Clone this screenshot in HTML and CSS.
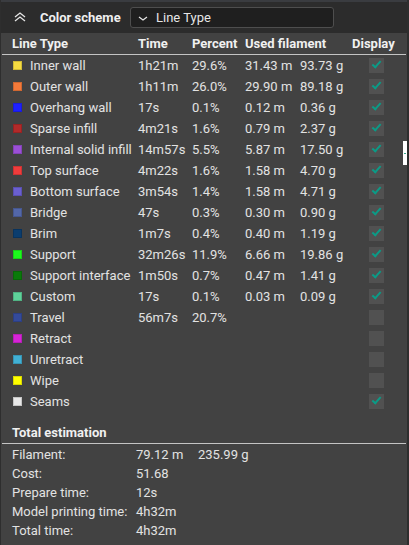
FILE: index.html
```html
<!DOCTYPE html>
<html>
<head>
<meta charset="utf-8">
<link rel="stylesheet" href="styles.css">
</head>
<body>
<div class="panel">
  <div class="topbar">
    <svg class="collapse" width="12" height="10" viewBox="0 0 12 10"><path d="M1 5 L6 1 L11 5 M1 9 L6 5 L11 9" fill="none" stroke="#e6e6e6" stroke-width="1.3"/></svg>
    <span class="title">Color scheme</span>
    <div class="select">
      <svg width="10" height="5" viewBox="0 0 10 5"><path d="M1 1 L5 4 L9 1" fill="none" stroke="#e6e6e6" stroke-width="1.2"/></svg>
      <span>Line Type</span>
    </div>
  </div>
  <div class="body">
    <div class="thead">
      <span class="h-type">Line Type</span>
      <span>Time</span>
      <span>Percent</span>
      <span class="h-used">Used filament</span>
      <span class="h-disp">Display</span>
    </div>
    <div class="rule"></div>
    <div class="rows">
      <div class="row"><i class="sw" style="background:#f6dc41"></i><span>Inner wall</span><span>1h21m</span><span>29.6%</span><span>31.43 m</span><span>93.73 g</span><b class="cb on"></b></div>
      <div class="row"><i class="sw" style="background:#f47a3a"></i><span>Outer wall</span><span>1h11m</span><span>26.0%</span><span>29.90 m</span><span>89.18 g</span><b class="cb on"></b></div>
      <div class="row"><i class="sw" style="background:#1e20ff"></i><span>Overhang wall</span><span>17s</span><span>0.1%</span><span>0.12 m</span><span>0.36 g</span><b class="cb on"></b></div>
      <div class="row"><i class="sw" style="background:#b22a2a"></i><span>Sparse infill</span><span>4m21s</span><span>1.6%</span><span>0.79 m</span><span>2.37 g</span><b class="cb on"></b></div>
      <div class="row"><i class="sw" style="background:#9b4fd6"></i><span>Internal solid infill</span><span>14m57s</span><span>5.5%</span><span>5.87 m</span><span>17.50 g</span><b class="cb on"></b></div>
      <div class="row"><i class="sw" style="background:#f03c3c"></i><span>Top surface</span><span>4m22s</span><span>1.6%</span><span>1.58 m</span><span>4.70 g</span><b class="cb on"></b></div>
      <div class="row"><i class="sw" style="background:#6a5fd0"></i><span>Bottom surface</span><span>3m54s</span><span>1.4%</span><span>1.58 m</span><span>4.71 g</span><b class="cb on"></b></div>
      <div class="row"><i class="sw" style="background:#5367a8"></i><span>Bridge</span><span>47s</span><span>0.3%</span><span>0.30 m</span><span>0.90 g</span><b class="cb on"></b></div>
      <div class="row"><i class="sw" style="background:#0b3d6e"></i><span>Brim</span><span>1m7s</span><span>0.4%</span><span>0.40 m</span><span>1.19 g</span><b class="cb on"></b></div>
      <div class="row"><i class="sw" style="background:#1cfa1c"></i><span>Support</span><span>32m26s</span><span>11.9%</span><span>6.66 m</span><span>19.86 g</span><b class="cb on"></b></div>
      <div class="row"><i class="sw" style="background:#0a7a0a"></i><span>Support interface</span><span>1m50s</span><span>0.7%</span><span>0.47 m</span><span>1.41 g</span><b class="cb on"></b></div>
      <div class="row"><i class="sw" style="background:#5ed29a"></i><span>Custom</span><span>17s</span><span>0.1%</span><span>0.03 m</span><span>0.09 g</span><b class="cb on"></b></div>
      <div class="row"><i class="sw" style="background:#344a9a"></i><span>Travel</span><span>56m7s</span><span>20.7%</span><span></span><span></span><b class="cb"></b></div>
      <div class="row"><i class="sw" style="background:#d624d6"></i><span>Retract</span><span></span><span></span><span></span><span></span><b class="cb"></b></div>
      <div class="row"><i class="sw" style="background:#41b0d4"></i><span>Unretract</span><span></span><span></span><span></span><span></span><b class="cb"></b></div>
      <div class="row"><i class="sw" style="background:#ffff00"></i><span>Wipe</span><span></span><span></span><span></span><span></span><b class="cb"></b></div>
      <div class="row"><i class="sw" style="background:#e8e8e8"></i><span>Seams</span><span></span><span></span><span></span><span></span><b class="cb on"></b></div>
    </div>
    <div class="total-title">Total estimation</div>
    <div class="rule"></div>
    <div class="summary">
      <span>Filament:</span><span class="val"><span class="m">79.12 m</span><span>235.99 g</span></span>
      <span>Cost:</span><span class="val">51.68</span>
      <span>Prepare time:</span><span class="val">12s</span>
      <span>Model printing time:</span><span class="val">4h32m</span>
      <span>Total time:</span><span class="val">4h32m</span>
    </div>
  </div>
  <div class="edge-tab"><i></i></div>
</div>
</body>
</html>
```

FILE: styles.css
```css
html, body {
  margin: 0;
  padding: 0;
  background: #424242;
}
body {
  font-family: Roboto, "Noto Sans", sans-serif;
  font-size: 13px;
  color: #e2e2e2;
}
.panel {
  position: relative;
  width: 409px;
  height: 545px;
  box-sizing: border-box;
  background: #424242;
  border-left: 1px solid #2e2e2e;
  border-right: 2px solid #2e2e2e;
  overflow: hidden;
}
.topbar {
  height: 31px;
  border-top: 2px solid #3a3c40;
  background: #2c2c2c;
  display: flex;
  align-items: center;
  padding-left: 13px;
}
.collapse {
  display: block;
  margin-top: -1px;
}
.title {
  font-weight: bold;
  color: #efefef;
  margin-left: 14px;
  width: 76px;
  white-space: nowrap;
}
.select {
  margin-left: 14px;
  width: 195px;
  height: 19px;
  border: 1px solid #4e4e4e;
  border-radius: 3px;
  background: #1f1f1f;
  display: flex;
  align-items: center;
  padding-left: 7px;
  gap: 8px;
  color: #e6e6e6;
}
.select svg { display: block; margin-top: 2px; }
.thead {
  height: 21px;
  display: grid;
  grid-template-columns: 126px 54px 53px 107px auto;
  align-items: center;
  padding-left: 11px;
  font-weight: bold;
  color: #f0f0f0;
  white-space: nowrap;
}
.rule {
  height: 1px;
  background: #c4c4c4;
  margin: 0 1px 0 1px;
}
.row {
  height: 21px;
  display: grid;
  grid-template-columns: 17px 108px 54px 53px 55px 69px 15px;
  align-items: center;
  padding-left: 12px;
  white-space: nowrap;
}
.sw {
  display: block;
  width: 9px;
  height: 9px;
  box-sizing: border-box;
  border: 1px solid rgba(0,0,0,0.15);
}
.cb {
  display: block;
  width: 15px;
  height: 15px;
  background: #515151;
  position: relative;
}
.cb.on::after {
  content: "";
  position: absolute;
  left: 3px;
  top: 3px;
  width: 9px;
  height: 5px;
  border-left: 2px solid #0b9b87;
  border-bottom: 2px solid #0b9b87;
  transform: rotate(-48deg);
  box-sizing: border-box;
}
.total-title {
  margin-top: 10px;
  height: 21px;
  line-height: 21px;
  padding-left: 11px;
  font-weight: bold;
  color: #f0f0f0;
}
.summary {
  display: grid;
  grid-template-columns: 124px auto;
  grid-auto-rows: 19px;
  align-items: center;
  padding-left: 11px;
  padding-top: 1px;
  white-space: nowrap;
}
.val { display: flex; }
.val .m { width: 62px; }
.edge-tab {
  position: absolute;
  left: 402px;
  top: 141px;
  width: 6px;
  height: 24px;
  background: #ffffff;
}
.edge-tab i {
  position: absolute;
  left: 1px;
  top: 12px;
  width: 2px;
  height: 1px;
  background: #3aa58a;
}
```
